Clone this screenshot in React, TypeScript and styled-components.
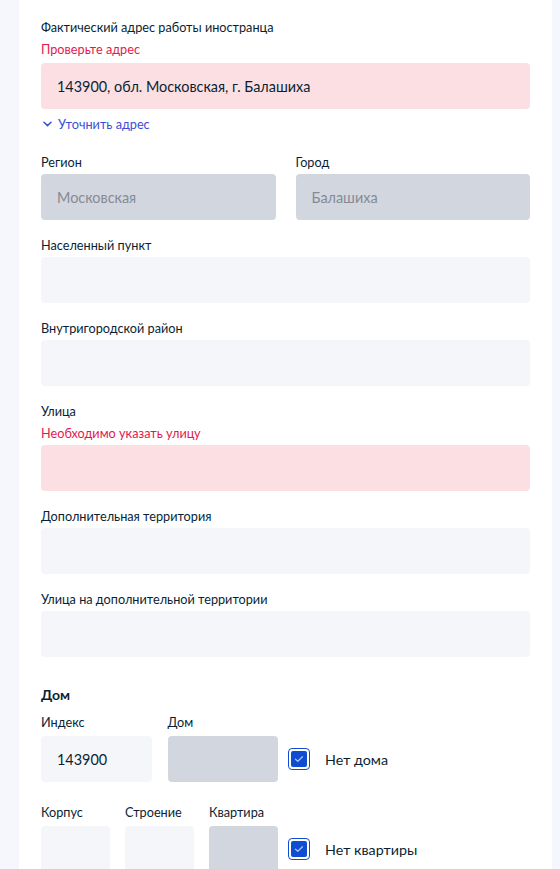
import styled, { createGlobalStyle } from "styled-components";

const GlobalStyle = createGlobalStyle`
  body {
    margin: 0;
    background: #f5f7fc;
    font-family: Lato, "Liberation Sans", sans-serif;
    color: #0b1f33;
  }
`;

type Variant = "default" | "disabled" | "error";

const inputBg: Record<Variant, string> = {
  default: "#f5f6fa",
  disabled: "#d2d6df",
  error: "#fcdfe3",
};

const Card = styled.div`
  width: 533px;
  margin-left: 19px;
  box-sizing: border-box;
  padding: 17px 22px 0;
  background: #fff;
  min-height: 869px;
  display: flex;
  flex-direction: column;
`;

const Field = styled.div`
  display: flex;
  flex-direction: column;
  margin-bottom: 15px;
`;

const Label = styled.div<{ $gap?: number }>`
  font-size: 12.7px;
  line-height: 20px;
  margin-bottom: ${(p) => p.$gap ?? 2}px;
  color: #0b1f33;
  white-space: nowrap;
`;

const ErrorText = styled(Label)`
  color: #e3194d;
`;

const Input = styled.div<{ $variant?: Variant }>`
  box-sizing: border-box;
  height: 46px;
  width: 100%;
  border-radius: 4px;
  padding: 0 16px;
  display: flex;
  align-items: center;
  font-size: 14.4px;
  background: ${(p) => inputBg[p.$variant || "default"]};
  color: ${(p) => (p.$variant === "disabled" ? "#868b95" : "#0b1f33")};
`;

const LinkRow = styled.div`
  display: flex;
  align-items: center;
  gap: 6px;
  margin: -10px 0 18px 2px;
  color: #3b4fd6;
  font-size: 12.7px;
  line-height: 20px;
`;

const TwoCols = styled.div`
  display: grid;
  grid-template-columns: 1fr 1fr;
  gap: 20px;
`;

const Heading = styled.div`
  font-size: 14px;
  font-weight: 700;
  line-height: 20px;
  margin: 13px 0 7px;
`;

const HouseRow = styled.div`
  display: flex;
  align-items: flex-end;
  margin-bottom: 20px;
`;

const Cells = styled.div<{ $cols: number; $gap: number }>`
  width: 237px;
  display: grid;
  grid-template-columns: repeat(${(p) => p.$cols}, 1fr);
  column-gap: ${(p) => p.$gap}px;
`;

const Cell = styled.div`
  display: flex;
  flex-direction: column;
`;

const Check = styled.label`
  display: flex;
  align-items: center;
  height: 46px;
  margin-left: 10px;
  gap: 15px;
  font-size: 14.3px;
  color: #0b1f33;
`;

const Box = styled.span`
  box-sizing: border-box;
  width: 22px;
  height: 22px;
  border: 1.5px solid #0d4cd3;
  border-radius: 4px;
  padding: 2px;
  display: flex;
`;

const BoxFill = styled.span`
  flex: 1;
  background: #0d4cd3;
  border-radius: 2px;
  display: flex;
  align-items: center;
  justify-content: center;
`;

function Checkbox({ text }: { text: string }) {
  return (
    <Check>
      <Box>
        <BoxFill>
          <svg width="10" height="8" viewBox="0 0 10 8" fill="none">
            <path d="M1.5 4.2 3.8 6.3 8.5 1.7" stroke="#a9c0f2" strokeWidth="1.3" strokeLinecap="round" strokeLinejoin="round" />
          </svg>
        </BoxFill>
      </Box>
      {text}
    </Check>
  );
}

interface IFieldBlock {
  label: string;
  error?: string;
  errorGap?: number;
  value?: string;
  variant?: Variant;
}

function FieldBlock({ label, error, errorGap, value, variant }: IFieldBlock) {
  return (
    <Field>
      <Label>{label}</Label>
      {error && <ErrorText $gap={errorGap}>{error}</ErrorText>}
      <Input $variant={variant}>{value}</Input>
    </Field>
  );
}

export default function App() {
  return (
    <>
      <GlobalStyle />
      <Card>
        <FieldBlock
          label="Фактический адрес работы иностранца"
          error="Проверьте адрес"
          errorGap={4}
          value="143900, обл. Московская, г. Балашиха"
          variant="error"
        />
        <LinkRow>
          <svg width="9" height="6" viewBox="0 0 9 6" fill="none">
            <path d="M1 1.2 4.5 4.6 8 1.2" stroke="#3b4fd6" strokeWidth="1.5" strokeLinecap="round" strokeLinejoin="round" />
          </svg>
          Уточнить адрес
        </LinkRow>
        <TwoCols>
          <FieldBlock label="Регион" value="Московская" variant="disabled" />
          <FieldBlock label="Город" value="Балашиха" variant="disabled" />
        </TwoCols>
        <FieldBlock label="Населенный пункт" />
        <FieldBlock label="Внутригородской район" />
        <FieldBlock label="Улица" error="Необходимо указать улицу" variant="error" />
        <FieldBlock label="Дополнительная территория" />
        <FieldBlock label="Улица на дополнительной территории" />

        <Heading>Дом</Heading>
        <HouseRow>
          <Cells $cols={2} $gap={16}>
            <Cell>
              <Label $gap={4}>Индекс</Label>
              <Input>143900</Input>
            </Cell>
            <Cell>
              <Label $gap={4}>Дом</Label>
              <Input $variant="disabled" />
            </Cell>
          </Cells>
          <Checkbox text="Нет дома" />
        </HouseRow>
        <HouseRow>
          <Cells $cols={3} $gap={15}>
            <Cell>
              <Label $gap={4}>Корпус</Label>
              <Input />
            </Cell>
            <Cell>
              <Label $gap={4}>Строение</Label>
              <Input />
            </Cell>
            <Cell>
              <Label $gap={4}>Квартира</Label>
              <Input $variant="disabled" />
            </Cell>
          </Cells>
          <Checkbox text="Нет квартиры" />
        </HouseRow>
      </Card>
    </>
  );
}
